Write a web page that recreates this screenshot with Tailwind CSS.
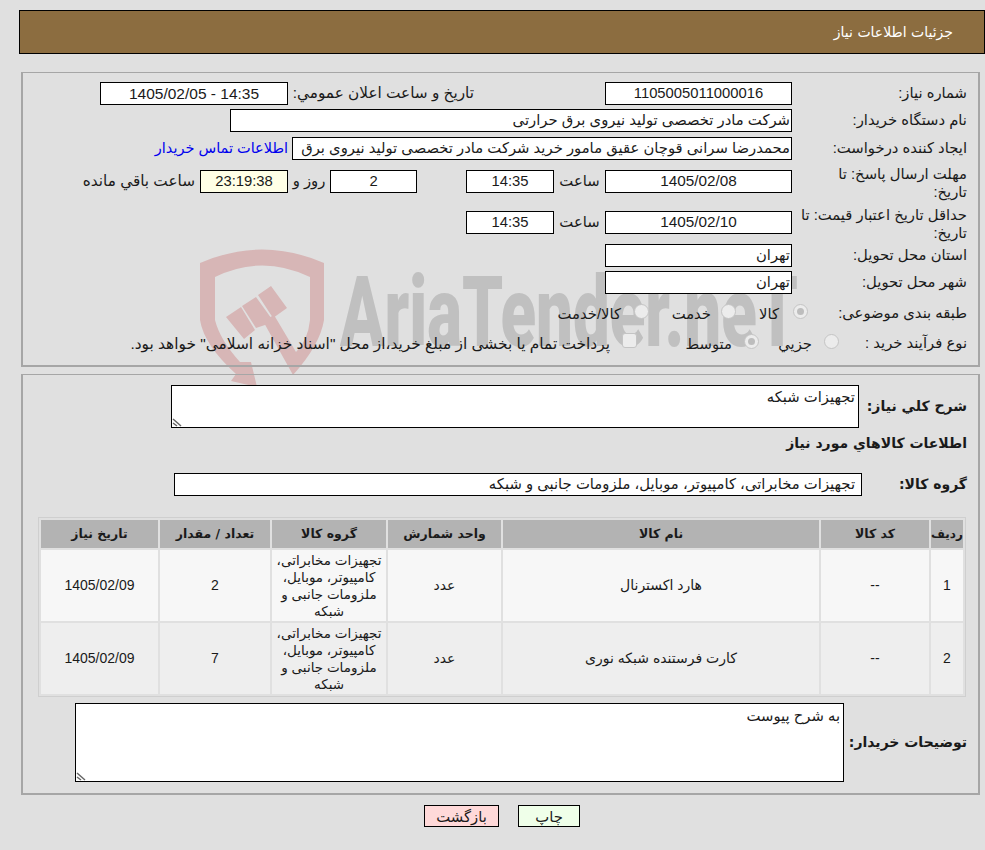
<!DOCTYPE html>
<html lang="fa" dir="rtl">
<head>
<meta charset="UTF-8">
<title>جزئیات اطلاعات نیاز</title>
<script src="https://cdn.jsdelivr.net/npm/@tailwindcss/browser@4"></script>
</head>
<body class="bg-[#e0e0e0] font-['Liberation_Sans','DejaVu_Sans',sans-serif] text-[14.8px] text-[#1a1a1a] h-[850px] overflow-hidden relative">

<!-- watermark, sits behind the form -->
<div class="absolute left-[198px] top-[248px] w-[620px] h-[140px] -z-10 pointer-events-none" dir="ltr">
  <svg class="absolute left-0 top-0" width="130" height="140" viewBox="198 248 130 140">
    <path d="M200 263 Q262 236 324 263 L324 320 Q320 345 293 375 L263 321 L274 315 L296 352 Q308 340 310 320 L310 277 Q262 254 215 277 L215 320 Q220 340 240 362 L251 362 L257 387 L231 381 L236 374 Q204 345 200 320 Z" fill="#d7b6b6"/>
    <path d="M226 317 L241 307 L255 330 L244 339 Z M242 306 L256 297 L274 322 L256 328 Z M258 295 L271 286 L287 308 L273 318 Z" fill="#d7b6b6"/>
  </svg>
  <span class="absolute left-[142px] top-[10px] text-[98px] leading-[110px] font-black font-['Roboto',sans-serif] text-[#c0c0c0] whitespace-nowrap origin-left scale-x-[0.667]">AriaTender.neT</span>
</div>

<div class="pt-[10px] pl-[19px]">
  <div class="h-[44px] bg-[#8c6d40] border border-black flex items-center pr-[31px] text-white font-['DejaVu_Sans'] text-[14px]">جزئیات اطلاعات نیاز</div>
</div>

<!-- top panel -->
<div class="mt-[18px] mr-[5px] ml-[21px] h-[295px] border-2 border-t border-[#a6a6a6] pt-[9px]">
  <div class="flex h-[23px] items-center mb-[4px]">
    <div class="w-[186px] pr-[11px]">شماره نیاز:</div>
    <div class="w-[187px] h-[23px] bg-white border border-black flex items-center justify-center">1105005011000016</div>
    <div class="w-[131px]"></div>
    <div class="w-[186px] whitespace-nowrap text-[15.3px]">تاریخ و ساعت اعلان عمومي:</div>
    <div class="w-[188px] h-[23px] bg-white border border-black flex items-center justify-center text-[15.5px]" dir="ltr">1405/02/05 - 14:35</div>
  </div>
  <div class="flex h-[23px] items-center mb-[5px]">
    <div class="w-[186px] pr-[11px]">نام دستگاه خریدار:</div>
    <div class="w-[562px] h-[23px] bg-white border border-black flex items-center pr-[1px]">شرکت مادر تخصصی تولید نیروی برق حرارتی</div>
  </div>
  <div class="flex h-[23px] items-center mb-[10px]">
    <div class="w-[186px] pr-[11px] whitespace-nowrap">ایجاد کننده درخواست:</div>
    <div class="w-[500px] h-[23px] bg-white border border-black flex items-center pr-[1px] overflow-hidden whitespace-nowrap">محمدرضا سرانی قوچان عقیق مامور خرید شرکت مادر تخصصی تولید نیروی برق</div>
    <a href="#" class="text-[#0000ee] mr-[4px] whitespace-nowrap text-[14.5px]">اطلاعات تماس خریدار</a>
  </div>
  <div class="flex h-[23px] items-center mb-[18px]">
    <div class="w-[186px] pr-[11px] leading-[18px] mt-[2px] whitespace-nowrap">مهلت ارسال پاسخ: تا<br>تاریخ:</div>
    <div class="w-[187px] h-[23px] bg-white border border-black flex items-center justify-center text-[15.3px]">1405/02/08</div>
    <div class="w-[51px] text-center">ساعت</div>
    <div class="w-[88px] h-[23px] bg-white border border-black flex items-center justify-center">14:35</div>
    <div class="w-[49px]"></div>
    <div class="w-[87px] h-[23px] bg-white border border-black flex items-center justify-center">2</div>
    <div class="w-[42px] text-center whitespace-nowrap">روز و</div>
    <div class="w-[88px] h-[23px] bg-[#ffffe6] border border-black flex items-center justify-center">23:19:38</div>
    <div class="pr-[5px] whitespace-nowrap text-[15.3px]">ساعت باقي مانده</div>
  </div>
  <div class="flex h-[23px] items-center mb-[10px]">
    <div class="w-[186px] pr-[11px] leading-[18px] mt-[2px] whitespace-nowrap">حداقل تاریخ اعتبار قیمت: تا<br>تاریخ:</div>
    <div class="w-[187px] h-[23px] bg-white border border-black flex items-center justify-center text-[15.3px]">1405/02/10</div>
    <div class="w-[51px] text-center">ساعت</div>
    <div class="w-[88px] h-[23px] bg-white border border-black flex items-center justify-center">14:35</div>
  </div>
  <div class="flex h-[23px] items-center mb-[4px]">
    <div class="w-[186px] pr-[11px]">استان محل تحویل:</div>
    <div class="w-[187px] h-[23px] bg-white border border-black flex items-center pr-[1px]">تهران</div>
  </div>
  <div class="flex h-[23px] items-center mb-[8px]">
    <div class="w-[186px] pr-[11px]">شهر محل تحویل:</div>
    <div class="w-[187px] h-[23px] bg-white border border-black flex items-center pr-[1px]">تهران</div>
  </div>
  <div class="flex h-[22px] items-center mb-[8px]">
    <div class="w-[170px] pr-[11px] whitespace-nowrap">طبقه بندی موضوعی:</div>
    <div class="w-[15px] h-[15px] rounded-full bg-[#ececec] border border-[#c4c4c4] flex items-center justify-center -mt-[3px]"><span class="w-[7px] h-[7px] rounded-full bg-[#bdbdbd]"></span></div>
    <div class="w-[57px] pr-[14px] pt-[2px]">كالا</div>
    <div class="w-[15px] h-[15px] rounded-full bg-[#ececec] border border-[#c4c4c4] -mt-[3px]"></div>
    <div class="w-[72px] pr-[10px] pt-[2px]">خدمت</div>
    <div class="w-[15px] h-[15px] rounded-full bg-[#ececec] border border-[#c4c4c4] -mt-[3px]"></div>
    <div class="pr-[13px] pt-[2px]">كالا/خدمت</div>
  </div>
  <div class="flex h-[22px] items-center">
    <div class="w-[139px] pr-[11px] whitespace-nowrap">نوع فرآیند خرید :</div>
    <div class="w-[15px] h-[15px] rounded-full bg-[#ececec] border border-[#c4c4c4] -mt-[3px]"></div>
    <div class="w-[65px] pr-[12px] pt-[2px]">جزيي</div>
    <div class="w-[15px] h-[15px] rounded-full bg-[#ececec] border border-[#c4c4c4] flex items-center justify-center -mt-[3px]"><span class="w-[7px] h-[7px] rounded-full bg-[#bdbdbd]"></span></div>
    <div class="w-[107px] pr-[12px] pt-[2px]">متوسط</div>
    <div class="w-[15px] h-[15px] rounded-[3px] bg-[#ececec] border border-[#c4c4c4] -mt-[5px]"></div>
    <div class="pr-[12px] pt-[2px] whitespace-nowrap text-[15.4px]">پرداخت تمام یا بخشی از مبلغ خرید،از محل "اسناد خزانه اسلامی" خواهد بود.</div>
  </div>
</div>

<!-- bottom panel -->
<div class="mt-[7px] mr-[5px] ml-[21px] h-[421px] border-2 border-t border-[#a6a6a6] pt-[10px]">
  <div class="flex h-[43px]">
    <div class="w-[119px] pr-[11px] font-bold font-['DejaVu_Sans'] text-[14px] pt-[11px] whitespace-nowrap">شرح کلي نیاز:</div>
    <div class="w-[688px] h-[43px] bg-white border border-black pr-[3px] relative">تجهیزات شبکه
      <svg class="absolute left-0 bottom-0" width="11" height="11" viewBox="0 0 11 11"><path d="M1 3 L9 10 M1 7 L5 10" stroke="#666" stroke-width="1.5"/></svg>
    </div>
  </div>
  <div class="font-bold font-['DejaVu_Sans'] text-[14px] pr-[11px] mt-[5px] h-[20px] leading-[20px]">اطلاعات کالاهاي مورد نیاز</div>
  <div class="flex h-[23px] mt-[20px] items-center">
    <div class="w-[116px] pr-[11px] font-bold font-['DejaVu_Sans'] text-[14px]">گروه کالا:</div>
    <div class="w-[688px] h-[23px] bg-white border border-black flex items-center pr-[6px]">تجهیزات مخابراتی، کامپیوتر، موبایل، ملزومات جانبی و شبکه</div>
  </div>
  <div class="mt-[21px] mr-[12px] ml-[15px] border border-[#cfcfcf]">
    <table class="w-full border-separate border-spacing-[2px] text-center text-[14px] table-fixed">
      <thead>
        <tr class="bg-[#b3b3b3] font-bold font-['DejaVu_Sans'] text-[12.5px] h-[28px]">
          <th class="w-[32px] text-[12px]">ردیف</th>
          <th class="w-[108px]">کد کالا</th>
          <th class="w-[316px]">نام کالا</th>
          <th class="w-[113px]">واحد شمارش</th>
          <th class="w-[114px]">گروه کالا</th>
          <th class="w-[110px]">تعداد / مقدار</th>
          <th>تاریخ نیاز</th>
        </tr>
      </thead>
      <tbody>
        <tr class="bg-[#f7f7f7] h-[71px]">
          <td>1</td><td>--</td><td>هارد اکسترنال</td><td>عدد</td>
          <td class="leading-[17px] text-[13.5px]">تجهیزات مخابراتی، کامپیوتر، موبایل، ملزومات جانبی و شبکه</td>
          <td>2</td><td>1405/02/09</td>
        </tr>
        <tr class="bg-[#eeeeee] h-[71px]">
          <td>2</td><td>--</td><td>کارت فرستنده شبکه نوری</td><td>عدد</td>
          <td class="leading-[17px] text-[13.5px]">تجهیزات مخابراتی، کامپیوتر، موبایل، ملزومات جانبی و شبکه</td>
          <td>7</td><td>1405/02/09</td>
        </tr>
      </tbody>
    </table>
  </div>
  <div class="flex h-[79px] mt-[6px]">
    <div class="w-[134px] pr-[11px] font-bold font-['DejaVu_Sans'] text-[14px] flex items-center whitespace-nowrap">توضیحات خریدار:</div>
    <div class="w-[769px] h-[79px] bg-white border border-black pr-[3px] pt-[1px] relative">به شرح پیوست
      <svg class="absolute left-0 bottom-0" width="11" height="11" viewBox="0 0 11 11"><path d="M1 3 L9 10 M1 7 L5 10" stroke="#666" stroke-width="1.5"/></svg>
    </div>
  </div>
</div>

<div class="flex justify-center gap-[19px] mt-[10px] pl-[19px]">
  <button class="w-[62px] h-[22px] bg-[#efffe9] border border-black">چاپ</button>
  <button class="w-[75px] h-[22px] bg-[#ffd9d9] border border-black">بازگشت</button>
</div>

</body>
</html>
